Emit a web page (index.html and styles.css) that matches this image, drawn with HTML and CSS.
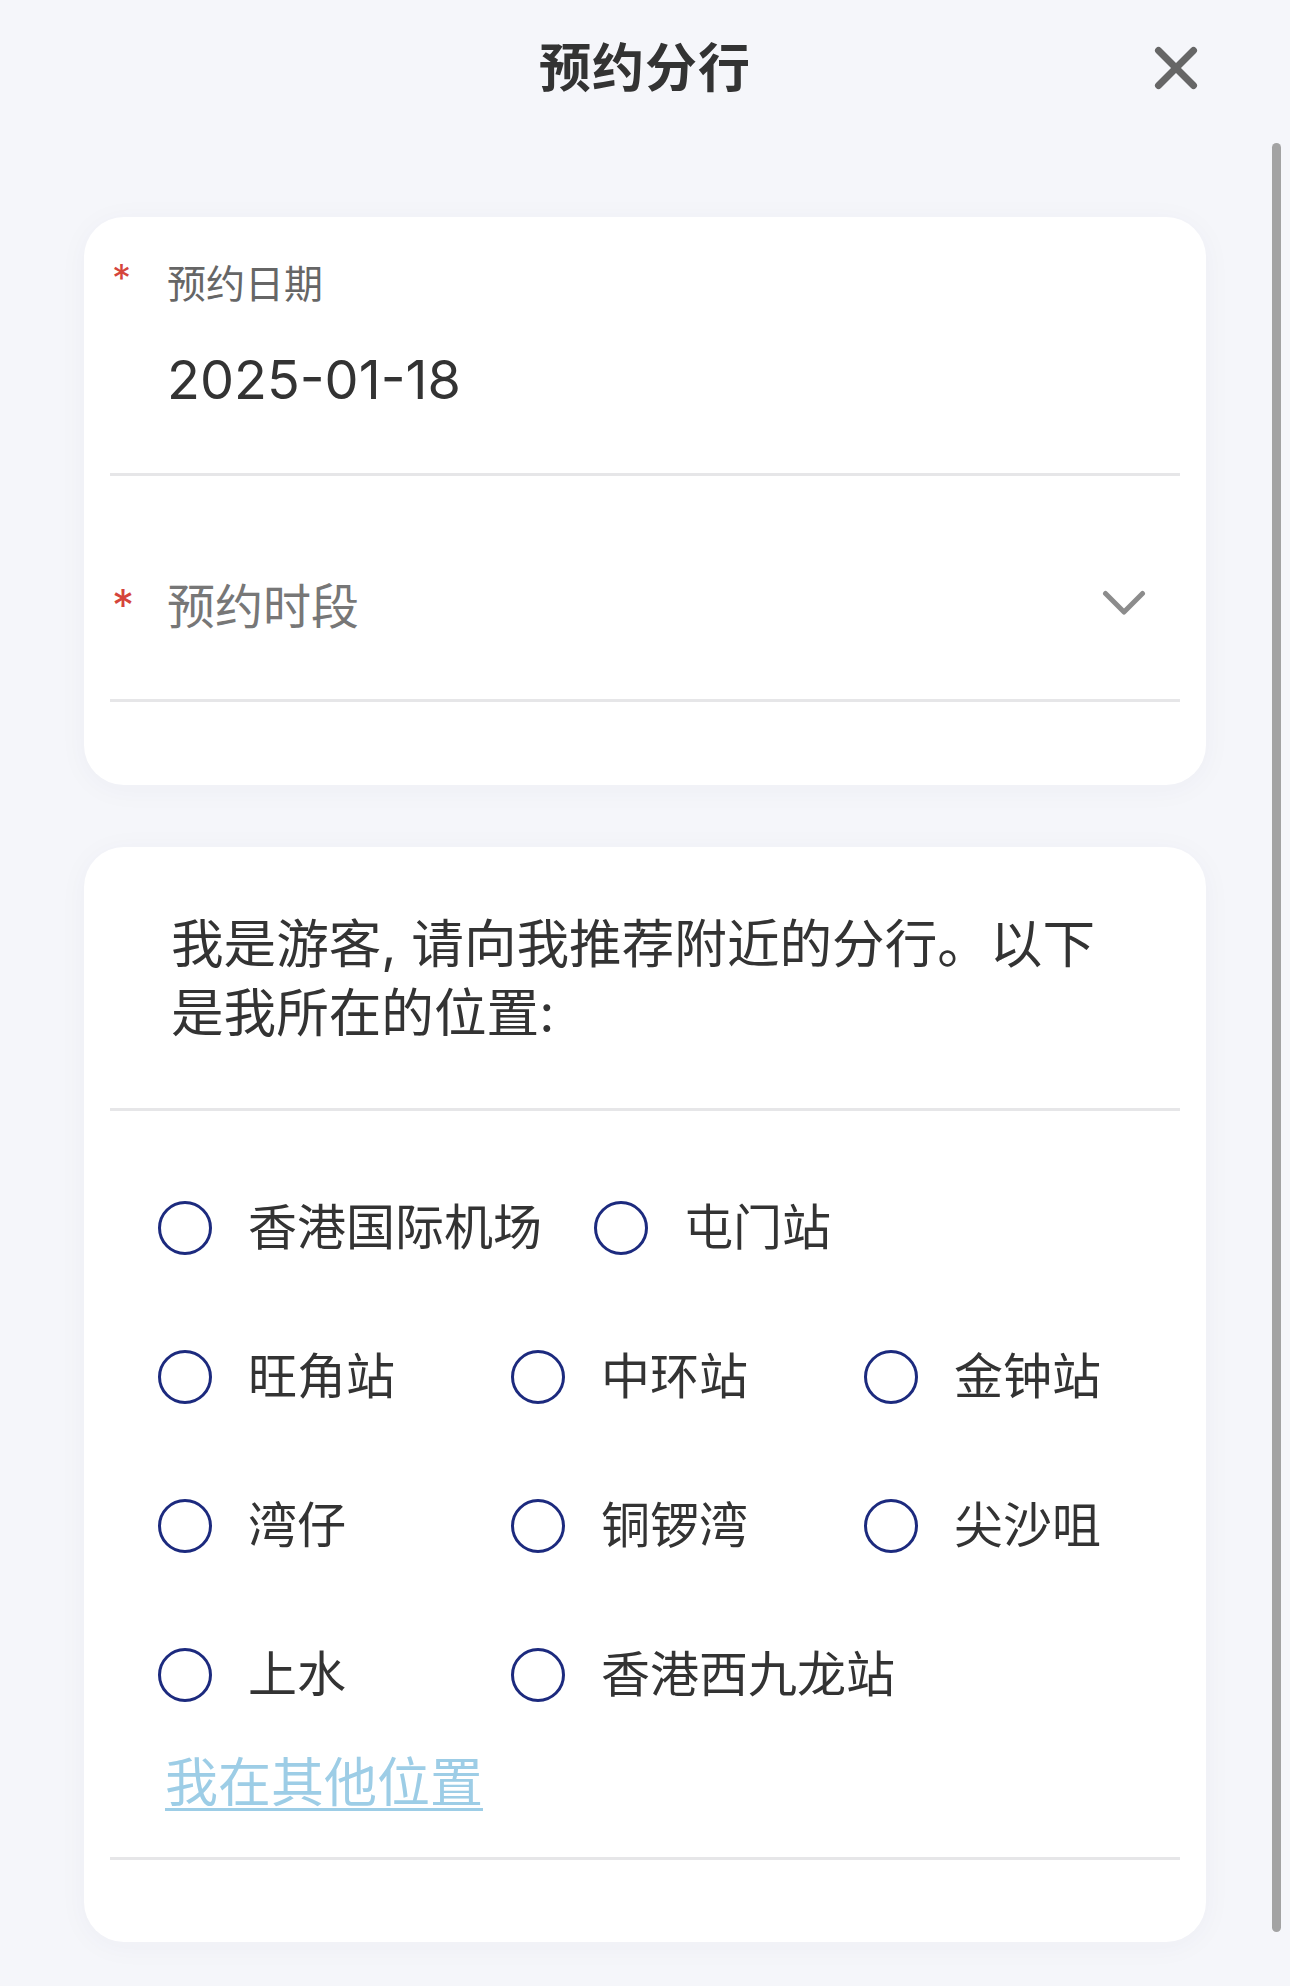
FILE: index.html
```html
<!DOCTYPE html>
<html lang="zh-CN">
<head>
<meta charset="utf-8">
<title>预约分行</title>
<link rel="stylesheet" href="styles.css">
</head>
<body>
<div class="page">
  <header class="topbar">
    <div class="topbar-side"></div>
    <h1 class="title">预约分行</h1>
    <div class="topbar-side topbar-right">
      <button class="close-btn" aria-label="关闭">
        <svg width="46" height="46" viewBox="0 0 46 46">
          <line x1="5.5" y1="5.5" x2="40.5" y2="40.5" stroke="#666" stroke-width="7" stroke-linecap="round"/>
          <line x1="40.5" y1="5.5" x2="5.5" y2="40.5" stroke="#666" stroke-width="7" stroke-linecap="round"/>
        </svg>
      </button>
    </div>
  </header>

  <main class="content">
    <section class="card card-form">
      <div class="field field-date">
        <div class="field-label"><span class="req">*</span><span class="label-text">预约日期</span></div>
        <div class="field-value">2025-01-18</div>
      </div>
      <div class="divider"></div>
      <div class="field field-select">
        <span class="req req-lg">*</span>
        <span class="placeholder">预约时段</span>
        <svg class="chevron" width="44" height="26" viewBox="0 0 44 26">
          <polyline points="3.5,3.5 22,22 40.5,3.5" fill="none" stroke="#8c8c8c" stroke-width="5" stroke-linecap="round" stroke-linejoin="round"/>
        </svg>
      </div>
      <div class="divider"></div>
    </section>

    <section class="card card-location">
      <p class="intro">我是游客, 请向我推荐附近的分行。以下是我所在的位置:</p>
      <div class="divider"></div>
      <div class="radio-group">
        <label class="radio-item"><span class="radio"></span><span class="radio-text">香港国际机场</span></label>
        <label class="radio-item"><span class="radio"></span><span class="radio-text">屯门站</span></label>
        <label class="radio-item"><span class="radio"></span><span class="radio-text">旺角站</span></label>
        <label class="radio-item"><span class="radio"></span><span class="radio-text">中环站</span></label>
        <label class="radio-item"><span class="radio"></span><span class="radio-text">金钟站</span></label>
        <label class="radio-item"><span class="radio"></span><span class="radio-text">湾仔</span></label>
        <label class="radio-item"><span class="radio"></span><span class="radio-text">铜锣湾</span></label>
        <label class="radio-item"><span class="radio"></span><span class="radio-text">尖沙咀</span></label>
        <label class="radio-item"><span class="radio"></span><span class="radio-text">上水</span></label>
        <label class="radio-item"><span class="radio"></span><span class="radio-text">香港西九龙站</span></label>
      </div>
      <a class="other-link" href="#">我在其他位置</a>
      <div class="divider"></div>
    </section>
  </main>

  <div class="scrollbar"></div>
</div>
</body>
</html>
```

FILE: styles.css
```css
* {
  box-sizing: border-box;
}

html, body {
  margin: 0;
  padding: 0;
}

body {
  background: #f5f6fa;
  font-family: "Inter", "Noto Sans CJK SC", sans-serif;
  color: #333;
}

.page {
  position: relative;
  width: 1290px;
  height: 1986px;
  overflow: hidden;
}

.topbar {
  display: grid;
  grid-template-columns: 1fr auto 1fr;
  align-items: center;
  height: 138px;
}

.title {
  margin: 0;
  font-size: 52px;
  font-weight: 700;
  line-height: 138px;
  color: #333;
  letter-spacing: 1px;
}

.topbar-right {
  display: flex;
  justify-content: flex-end;
}

.close-btn {
  display: block;
  width: 46px;
  height: 46px;
  margin-right: 91px;
  margin-top: -2px;
  padding: 0;
  border: none;
  background: transparent;
}

.close-btn svg {
  display: block;
}

.content {
  display: flex;
  flex-direction: column;
  gap: 62px;
  padding: 79px 84px 0;
}

.card {
  background: #fff;
  border-radius: 40px;
  padding: 0 26px;
  box-shadow: 0 4px 30px rgba(40, 50, 90, 0.04);
}

.card-form {
  padding-top: 41px;
  padding-bottom: 83px;
}

.divider {
  height: 3px;
  background: #e6e6e8;
}

.field-label {
  display: flex;
  align-items: center;
  height: 52px;
}

.req {
  display: inline-block;
  width: 57px;
  padding-left: 2px;
  color: #d5453b;
  font-size: 38px;
  line-height: 52px;
  position: relative;
  top: -6px;
}

.label-text {
  font-size: 39px;
  line-height: 52px;
  color: #666;
}

.field-value {
  margin-top: 35px;
  padding-left: 57px;
  font-size: 54px;
  line-height: 70px;
  color: #333;
  margin-bottom: 58px;
}

.field-select {
  display: flex;
  align-items: center;
  height: 64px;
  margin-top: 99px;
  margin-bottom: 60px;
}

.req-lg {
  font-size: 44px;
  top: -2px;
}

.placeholder {
  flex: 1;
  font-size: 48px;
  line-height: 64px;
  color: #777;
}

.chevron {
  display: block;
  margin-right: 34px;
  margin-top: -8px;
}

.card-location {
  padding-top: 63px;
  padding-bottom: 82px;
}

.intro {
  margin: 0 0 60px;
  padding: 0 61px;
  font-size: 52.6px;
  line-height: 69px;
  color: #333;
}

.radio-group {
  display: flex;
  flex-wrap: wrap;
  column-gap: 52px;
  padding-top: 42px;
  padding-left: 48px;
}

.radio-item {
  display: flex;
  align-items: center;
  gap: 36px;
  min-width: 301px;
  height: 149px;
}

.radio {
  flex: none;
  width: 54px;
  height: 54px;
  border: 3px solid #1c2a7e;
  border-radius: 50%;
}

.radio-text {
  font-size: 49px;
  line-height: 60px;
  color: #333;
  white-space: nowrap;
}

.other-link {
  display: block;
  align-self: flex-start;
  margin-top: 4px;
  margin-bottom: 44px;
  padding-left: 55px;
  font-size: 53px;
  line-height: 60px;
  color: #9dcde6;
  text-decoration: underline;
  text-decoration-thickness: 3px;
  text-underline-offset: 6px;
}

.scrollbar {
  position: absolute;
  left: 1272px;
  top: 143px;
  width: 9px;
  height: 1789px;
  border-radius: 5px;
  background: #a3a3a3;
}
```
